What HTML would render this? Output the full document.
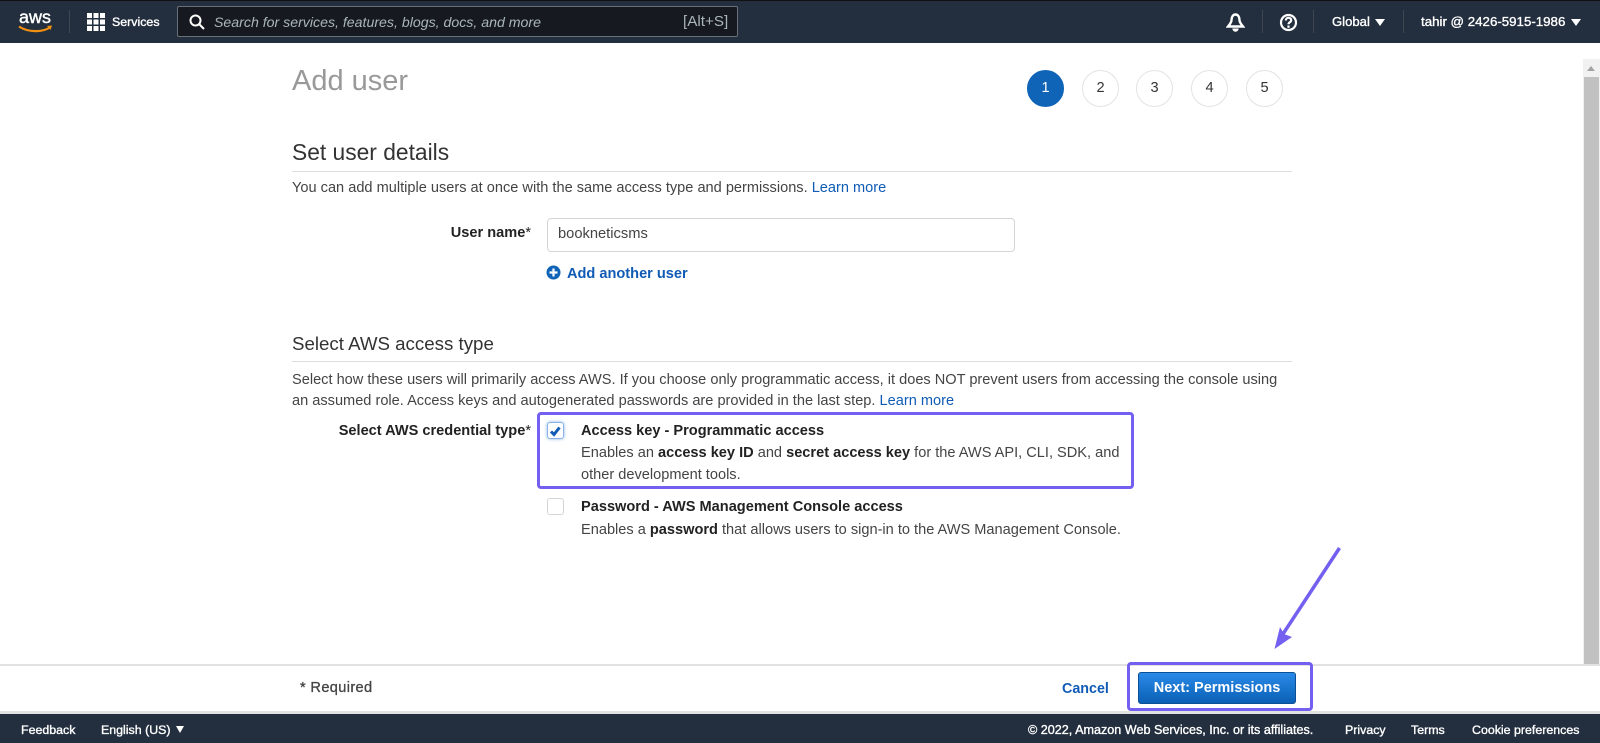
<!DOCTYPE html>
<html lang="en"><head><meta charset="utf-8"><title>Add user</title>
<style>
html,body{margin:0;padding:0;width:1600px;height:743px;overflow:hidden;background:#fff;font-family:"Liberation Sans",sans-serif}
.a{position:absolute;white-space:nowrap}
.t{position:absolute;white-space:nowrap;font-size:14.58px;line-height:20px;color:#444}
b{color:#222}
.l{color:#0f5bb5}
.n{color:#fff;font-size:12.4px;font-weight:normal;-webkit-text-stroke:.35px #fff;line-height:16px;position:absolute;white-space:nowrap}
.s{position:absolute;top:70px;width:35px;height:35px;border:1px solid #e3e3e3;border-radius:50%;text-align:center;line-height:35px;font-size:14.6px;color:#333}
.d{position:absolute;width:1px;background:#414750;top:10px;height:23px}
.car{position:absolute;width:0;height:0;border-left:5px solid transparent;border-right:5px solid transparent;border-top:7px solid #fff}
.cb{position:absolute;left:547px;width:15px;height:15px;border:1px solid #d5d5d5;border-radius:3px;background:#fff}
.pb{position:absolute;border:3px solid #7360f0;border-radius:4px;box-sizing:border-box}
</style></head><body>
<div class="a" style="left:0;top:0;width:1600px;height:43px;background:#232f3e;border-top:1px solid #111;box-sizing:border-box"></div>
<svg class="a" style="left:17px;top:8px" width="38" height="26" viewBox="0 0 38 26">
<text x="2" y="15" font-family="Liberation Sans" font-size="17.5" fill="#fff" stroke="#fff" stroke-width=".4" textLength="32" lengthAdjust="spacingAndGlyphs">aws</text>
<path d="M2 18.500C11 24.500 25 24.500 33 19.500" fill="none" stroke="#f29111" stroke-width="2.200"/><path d="M30 18l5-.5-1.500 4.500z" fill="#f29111"/></svg>
<div class="d" style="left:69px"></div>
<svg class="a" style="left:87px;top:13px" width="18" height="18" fill="#fff"><rect width="5" height="5"/><rect x="6.500" width="5" height="5"/><rect x="13" width="5" height="5"/><rect y="6.500" width="5" height="5"/><rect x="6.500" y="6.500" width="5" height="5"/><rect x="13" y="6.500" width="5" height="5"/><rect y="13" width="5" height="5"/><rect x="6.500" y="13" width="5" height="5"/><rect x="13" y="13" width="5" height="5"/></svg>
<div class="n" style="left:112px;top:14px;">Services</div>
<div class="a" style="left:177px;top:6px;width:561px;height:31px;background:#16191f;border:1px solid #687078;border-radius:2px;box-sizing:border-box"></div>
<svg class="a" style="left:189px;top:14px" width="16" height="16" fill="none" stroke="#fff" stroke-width="2"><circle cx="6.500" cy="6.500" r="5"/><path d="M10 10l5 5"/></svg>
<div class="a" style="left:214px;top:13px;font-size:14.15px;line-height:18px;font-style:italic;color:#aab7b8">Search for services, features, blogs, docs, and more</div>
<div class="a" style="left:683px;top:13px;font-size:15.200px;line-height:18px;color:#aab7b8">[Alt+S]</div>
<svg class="a" style="left:1226px;top:12px" width="19" height="20" fill="none" stroke="#fff" stroke-width="2.400"><path d="M9.500 2.500C7 2.500 5.500 5 5.500 8c0 2.500-1.500 4-3.500 6.500h15C15 12 13.500 10.500 13.500 8c0-3-1.500-5.500-4-5.500z"/><path d="M7.500 16.500a2 2 0 0 0 4 0" fill="#fff"/></svg>
<div class="d" style="left:1262px"></div>
<svg class="a" style="left:1279px;top:13px" width="19" height="19" fill="none" stroke="#fff" stroke-width="2.200"><circle cx="9.500" cy="9.500" r="7.500"/><path d="M6.800 7.500c0-3.500 5.400-3.500 5.400 -.3 0 2-2.700 2-2.700 4" /><path d="M9.500 12.500v2.300"/></svg>
<div class="d" style="left:1313px"></div>
<div class="n" style="left:1332px;top:14px;font-size:13.1px">Global</div><div class="car" style="left:1375px;top:19px"></div>
<div class="d" style="left:1403px"></div>
<div class="n" style="left:1421px;top:14px;font-size:13.3px">tahir @ 2426-5915-1986</div><div class="car" style="left:1571px;top:19px"></div>

<div class="a" style="left:1583px;top:59px;width:17px;height:605px;background:#f1f1f1"></div>
<div class="a" style="left:1587px;top:66px;width:0;height:0;border-left:4px solid transparent;border-right:4px solid transparent;border-bottom:5px solid #a3a3a3"></div>
<div class="a" style="left:1584px;top:77px;width:15px;height:587px;background:#c1c1c1"></div>

<div class="a" style="left:292px;top:61px;font-size:29px;line-height:40px;color:#999">Add user</div>
<div class="s" style="left:1027px;background:#0f64b7;border-color:#0f64b7;color:#fff">1</div>
<div class="s" style="left:1082px">2</div><div class="s" style="left:1136px">3</div><div class="s" style="left:1191px">4</div><div class="s" style="left:1246px">5</div>

<div class="a" style="left:292px;top:138px;font-size:22.800px;line-height:28px;color:#333">Set user details</div>
<div class="a" style="left:292px;top:171px;width:1000px;height:1px;background:#ddd"></div>
<div class="t" style="left:292px;top:178px">You can add multiple users at once with the same access type and permissions. <span class="l">Learn more</span></div>
<div class="t" style="right:1069px;top:223px;font-weight:bold;color:#222">User name<span style="font-weight:normal">*</span></div>
<div class="a" style="left:547px;top:218px;width:468px;height:34px;border:1px solid #d5d5d5;border-radius:4px;box-sizing:border-box"></div>
<div class="t" style="left:558px;top:224px;font-size:14.7px">bookneticsms</div>
<svg class="a" style="left:546px;top:265px" width="15" height="15"><circle cx="7.500" cy="7.500" r="7" fill="#0f64b7"/><path d="M7.500 3.500v8M3.500 7.500h8" stroke="#fff" stroke-width="2.200"/></svg>
<div class="t" style="left:567px;top:264px;font-weight:bold;color:#0f5bb5">Add another user</div>

<div class="a" style="left:292px;top:332px;font-size:18.700px;line-height:24px;color:#333">Select AWS access type</div>
<div class="a" style="left:292px;top:361px;width:1000px;height:1px;background:#ddd"></div>
<div class="t" style="left:292px;top:370px">Select how these users will primarily access AWS. If you choose only programmatic access, it does NOT prevent users from accessing the console using</div>
<div class="t" style="left:292px;top:391px">an assumed role. Access keys and autogenerated passwords are provided in the last step. <span class="l">Learn more</span></div>
<div class="t" style="right:1069px;top:421px;font-weight:bold;color:#222">Select AWS credential type<span style="font-weight:normal">*</span></div>
<div class="cb" style="top:422px;border-color:#8ab4e8;box-shadow:0 0 3px #8ab4e8"></div>
<svg class="a" style="left:549px;top:424px" width="14" height="14" fill="none" stroke="#0f5bb5" stroke-width="3"><path d="M2 7.500l3 3L10.500 3.500"/></svg>
<div class="t" style="left:581px;top:421px;font-weight:bold;color:#222">Access key - Programmatic access</div>
<div class="t" style="left:581px;top:443px">Enables an <b>access key ID</b> and <b>secret access key</b> for the AWS API, CLI, SDK, and</div>
<div class="t" style="left:581px;top:465px">other development tools.</div>
<div class="cb" style="top:498px"></div>
<div class="t" style="left:581px;top:497px;font-weight:bold;color:#222">Password - AWS Management Console access</div>
<div class="t" style="left:581px;top:520px">Enables a <b>password</b> that allows users to sign-in to the AWS Management Console.</div>
<div class="pb" style="left:537px;top:412px;width:597px;height:77px"></div>

<div class="a" style="left:0;top:664px;width:1600px;height:2px;background:#e2e2e2"></div>
<div class="a" style="left:0;top:711px;width:1600px;height:3px;background:#e2e2e2"></div>
<div class="t" style="left:300px;top:678px;font-size:14.6px;letter-spacing:.35px;-webkit-text-stroke:.3px #444">* Required</div>
<div class="t" style="left:1062px;top:679px;font-size:14.300px;font-weight:bold;color:#0f5bb5">Cancel</div>
<div class="a" style="left:1138px;top:672px;width:158px;height:32px;background:linear-gradient(#2a8ae8,#0a60b5);border:1px solid #0b4f96;border-radius:3px;box-sizing:border-box;color:#fff;font-weight:bold;font-size:14.500px;line-height:31px;text-align:center">Next: Permissions</div>
<div class="pb" style="left:1127px;top:662px;width:186px;height:49px"></div>
<svg class="a" style="left:1260px;top:540px" width="90" height="115"><path d="M79.500 8L21 97" stroke="#7360f0" stroke-width="3.500" fill="none"/><path d="M14.500 109L20 87 24 94 32 97z" fill="#7360f0"/></svg>

<div class="a" style="left:0;top:714px;width:1600px;height:29px;background:#232f3e"></div>
<div class="n" style="left:21px;top:722px">Feedback</div>
<div class="n" style="left:101px;top:722px">English (US)</div><div class="car" style="left:176px;top:726px;border-left-width:4.500px;border-right-width:4.500px"></div>
<div class="n" style="left:1028px;top:722px;font-size:12.6px">© 2022, Amazon Web Services, Inc. or its affiliates.</div>
<div class="n" style="left:1345px;top:722px">Privacy</div>
<div class="n" style="left:1411px;top:722px">Terms</div>
<div class="n" style="left:1472px;top:722px;font-size:12.4px">Cookie preferences</div>
</body></html>
